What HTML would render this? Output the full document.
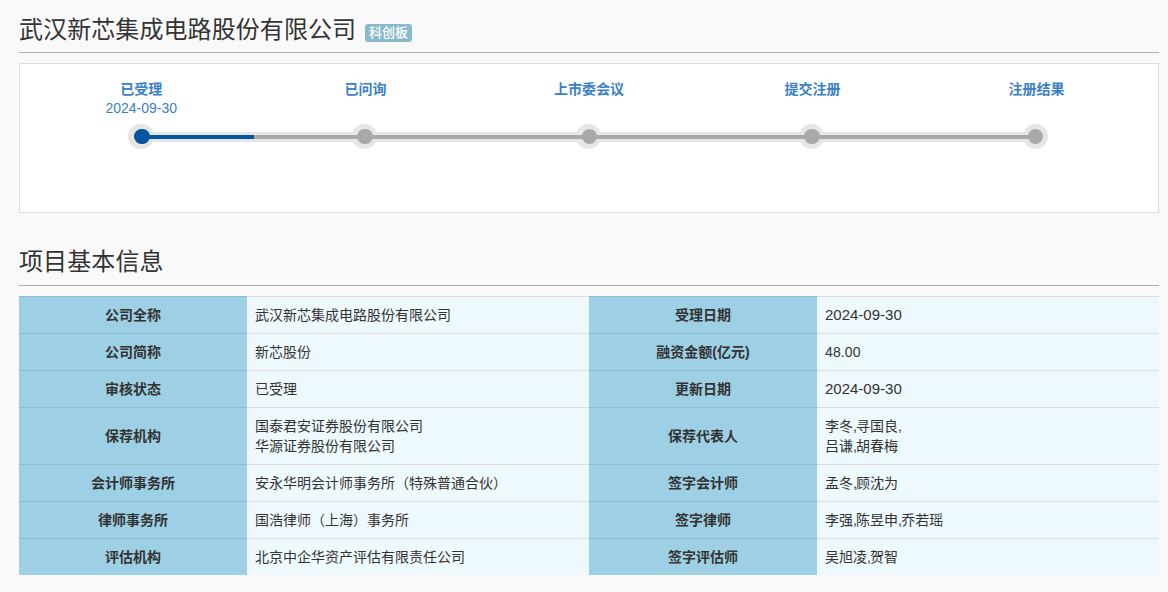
<!DOCTYPE html>
<html lang="zh-CN">
<head>
<meta charset="utf-8">
<title>武汉新芯集成电路股份有限公司</title>
<style>
*{box-sizing:border-box;margin:0;padding:0}
html,body{width:1168px;height:592px;overflow:hidden}
body{background:#f9f9f9;font-family:"Liberation Sans","Noto Sans CJK SC",sans-serif;font-size:14px;color:#333;position:relative}
.wrap{position:absolute;left:19px;top:0;width:1140px}
h2{font-weight:normal;font-size:24px;line-height:30px;color:#333;height:30px;white-space:nowrap}
.title{position:absolute;left:0;top:15px;width:1140px;height:38px;border-bottom:1px solid #adadad}
.title h2{position:absolute;left:0;top:0;letter-spacing:0.08px}
.badge{position:absolute;left:346px;top:9px;width:47px;height:18px;border-radius:3px;background:#8ab9cd;color:#fff;font-size:13px;font-weight:500;line-height:18px;text-align:center}
.panel{position:absolute;left:0;top:63px;width:1140px;height:150px;background:#fff;border:1px solid #ddd}
.step{position:absolute;top:16px;width:160px;margin-left:-80px;text-align:center;color:#3a80c6;line-height:20px;font-size:14px}
.step b{display:block;font-weight:bold;height:19px;line-height:19px}
.step span{display:block;height:20px;line-height:20px;margin-top:-1px}
.bar{position:absolute;left:122px;top:68px;width:895px;height:10px;background:#e6e6e6}
.line{position:absolute;left:122px;top:71px;width:895px;height:4px;background:#a9a9a9}
.line.on{width:112px;background:#03559f}
.ring{position:absolute;top:60.25px;width:25.2px;height:24.5px;margin-left:-12.95px;border-radius:50%;background:#e6e6e6}
.dot{position:absolute;top:64.7px;width:15.4px;height:15.4px;margin-left:-7.7px;border-radius:50%;background:#a9a9a9}
.dot.on{background:#03559f}
.sec h2{position:absolute;left:0;top:1.2px;letter-spacing:0.1px}
.sec{position:absolute;left:0;top:246px;width:1140px;height:40px;border-bottom:1px solid #adadad}
table{position:absolute;left:0;top:296px;width:1140px;border-collapse:separate;border-spacing:0;table-layout:fixed}
td{height:37px;border-top:1px solid #ddd;background:#eef9fe;padding:0 8px;font-size:14px;line-height:20px;color:#333;vertical-align:middle}
td.l{background:#9dd0e5;border-top-color:#8abbd0;text-align:center;font-weight:bold}
tr.d td{height:57px}
.n{font-size:15px}
.m{letter-spacing:0.1px}
.c{font-style:normal;margin-right:-0.8px}
</style>
</head>
<body>
<div class="wrap">
  <div class="title"><h2>武汉新芯集成电路股份有限公司</h2><span class="badge">科创板</span></div>
  <div class="panel">
    <div class="bar"></div>
    <div class="ring" style="left:121.3px"></div>
    <div class="ring" style="left:344.8px"></div>
    <div class="ring" style="left:569px"></div>
    <div class="ring" style="left:791.8px"></div>
    <div class="ring" style="left:1015.8px"></div>
    <div class="line"></div>
    <div class="line on"></div>
    <div class="dot on" style="left:121.8px"></div>
    <div class="dot" style="left:345.1px"></div>
    <div class="dot" style="left:569.3px"></div>
    <div class="dot" style="left:792px"></div>
    <div class="dot" style="left:1015.7px"></div>
    <div class="step" style="left:121.2px"><b>已受理</b><span>2024-09-30</span></div>
    <div class="step" style="left:345.5px"><b>已问询</b></div>
    <div class="step" style="left:569px"><b>上市委会议</b></div>
    <div class="step" style="left:792.6px"><b>提交注册</b></div>
    <div class="step" style="left:1016.4px"><b>注册结果</b></div>
  </div>
  <div class="sec"><h2>项目基本信息</h2></div>
  <table>
    <colgroup><col style="width:228px"><col style="width:342px"><col style="width:228px"><col style="width:342px"></colgroup>
    <tr><td class="l">公司全称</td><td>武汉新芯集成电路股份有限公司</td><td class="l">受理日期</td><td><span class="n">2024-09-30</span></td></tr>
    <tr><td class="l">公司简称</td><td>新芯股份</td><td class="l">融资金额(亿元)</td><td><span class="m">48.00</span></td></tr>
    <tr><td class="l">审核状态</td><td>已受理</td><td class="l">更新日期</td><td><span class="n">2024-09-30</span></td></tr>
    <tr class="d"><td class="l">保荐机构</td><td>国泰君安证券股份有限公司<br>华源证券股份有限公司</td><td class="l">保荐代表人</td><td>李冬<i class="c">,</i>寻国良<i class="c">,</i><br>吕谦<i class="c">,</i>胡春梅</td></tr>
    <tr><td class="l">会计师事务所</td><td>安永华明会计师事务所（特殊普通合伙）</td><td class="l">签字会计师</td><td>孟冬<i class="c">,</i>顾沈为</td></tr>
    <tr><td class="l">律师事务所</td><td>国浩律师（上海）事务所</td><td class="l">签字律师</td><td>李强<i class="c">,</i>陈昱申<i class="c">,</i>乔若瑶</td></tr>
    <tr><td class="l">评估机构</td><td>北京中企华资产评估有限责任公司</td><td class="l">签字评估师</td><td>吴旭凌<i class="c">,</i>贺智</td></tr>
  </table>
</div>
</body>
</html>
